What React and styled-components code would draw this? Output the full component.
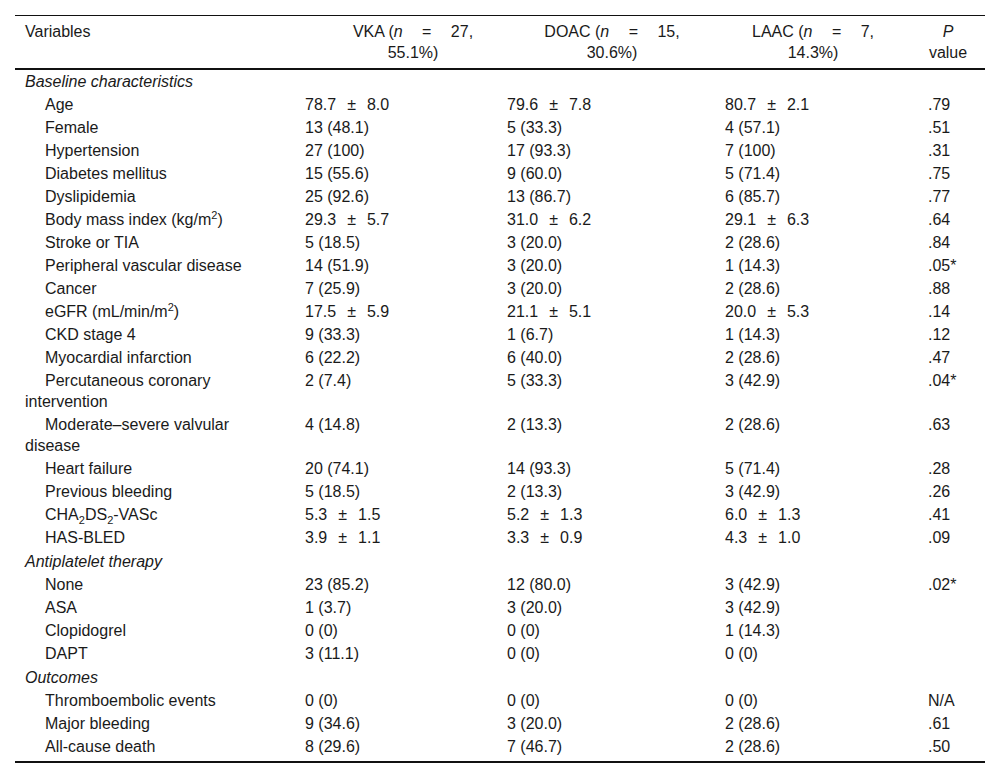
import React from 'react';
import styled, { createGlobalStyle } from 'styled-components';

const GlobalStyle = createGlobalStyle`
  body {
    margin: 0;
    background: #fff;
  }
`;

const Page = styled.div`
  padding: 15px;
  font-family: 'Liberation Sans', Arial, sans-serif;
  font-size: 16px;
  color: #1a1a1a;
`;

const Table = styled.table`
  width: 970px;
  border-collapse: separate;
  border-spacing: 0;
  table-layout: fixed;
  border-top: 1px solid #111;
  border-bottom: 2px solid #111;
`;

const HeadCell = styled.th`
  font-weight: normal;
  line-height: 21px;
  vertical-align: top;
  text-align: ${(p) => (p.$left ? 'left' : 'center')};
  padding: 5px 10px 5px ${(p) => p.$pl || 10}px;
  border-bottom: 2px solid #111;
  white-space: nowrap;
`;

const Eq = styled.span`
  padding: 0 19.4px;
`;

const Row = styled.tr`
  &:last-child td {
    padding-bottom: 4px;
  }
`;

const Cell = styled.td`
  line-height: 21px;
  vertical-align: top;
  padding: 1px 10px;
`;

const LabelCell = styled(Cell)`
  padding-right: 30px;
  padding-top: ${(p) => (p.$extra ? '2px' : '1px')};
  text-indent: ${(p) => (p.$indent ? '20px' : '0')};
  font-style: ${(p) => (p.$section ? 'italic' : 'normal')};
`;

const Pm = styled.span`
  padding: 0 11px;
`;

const Sup = styled.sup`
  font-size: 11px;
  line-height: 0;
  vertical-align: 6px;
`;

const Sub = styled.sub`
  font-size: 11px;
  line-height: 0;
  vertical-align: -4px;
`;

const pm = (a, b) => (
  <>
    {a}
    <Pm>±</Pm>
    {b}
  </>
);

const rows = [
  { section: 'Baseline characteristics' },
  ['Age', pm('78.7', '8.0'), pm('79.6', '7.8'), pm('80.7', '2.1'), '.79'],
  ['Female', '13 (48.1)', '5 (33.3)', '4 (57.1)', '.51'],
  ['Hypertension', '27 (100)', '17 (93.3)', '7 (100)', '.31'],
  ['Diabetes mellitus', '15 (55.6)', '9 (60.0)', '5 (71.4)', '.75'],
  ['Dyslipidemia', '25 (92.6)', '13 (86.7)', '6 (85.7)', '.77'],
  [<>Body mass index (kg/m<Sup>2</Sup>)</>, pm('29.3', '5.7'), pm('31.0', '6.2'), pm('29.1', '6.3'), '.64'],
  ['Stroke or TIA', '5 (18.5)', '3 (20.0)', '2 (28.6)', '.84'],
  ['Peripheral vascular disease', '14 (51.9)', '3 (20.0)', '1 (14.3)', '.05*'],
  ['Cancer', '7 (25.9)', '3 (20.0)', '2 (28.6)', '.88'],
  [<>eGFR (mL/min/m<Sup>2</Sup>)</>, pm('17.5', '5.9'), pm('21.1', '5.1'), pm('20.0', '5.3'), '.14'],
  ['CKD stage 4', '9 (33.3)', '1 (6.7)', '1 (14.3)', '.12'],
  ['Myocardial infarction', '6 (22.2)', '6 (40.0)', '2 (28.6)', '.47'],
  ['Percutaneous coronary intervention', '2 (7.4)', '5 (33.3)', '3 (42.9)', '.04*'],
  ['Moderate–severe valvular disease', '4 (14.8)', '2 (13.3)', '2 (28.6)', '.63'],
  ['Heart failure', '20 (74.1)', '14 (93.3)', '5 (71.4)', '.28'],
  ['Previous bleeding', '5 (18.5)', '2 (13.3)', '3 (42.9)', '.26'],
  [<>CHA<Sub>2</Sub>DS<Sub>2</Sub>-VASc</>, pm('5.3', '1.5'), pm('5.2', '1.3'), pm('6.0', '1.3'), '.41'],
  ['HAS-BLED', pm('3.9', '1.1'), pm('3.3', '0.9'), pm('4.3', '1.0'), '.09'],
  { section: 'Antiplatelet therapy' },
  ['None', '23 (85.2)', '12 (80.0)', '3 (42.9)', '.02*'],
  ['ASA', '1 (3.7)', '3 (20.0)', '3 (42.9)', ''],
  ['Clopidogrel', '0 (0)', '0 (0)', '1 (14.3)', ''],
  ['DAPT', '3 (11.1)', '0 (0)', '0 (0)', ''],
  { section: 'Outcomes' },
  ['Thromboembolic events', '0 (0)', '0 (0)', '0 (0)', 'N/A'],
  ['Major bleeding', '9 (34.6)', '3 (20.0)', '2 (28.6)', '.61'],
  ['All-cause death', '8 (29.6)', '7 (46.7)', '2 (28.6)', '.50'],
];

const groups = [
  { name: 'VKA', n: '27', pct: '55.1%', pl: 44 },
  { name: 'DOAC', n: '15', pct: '30.6%', pl: 22 },
  { name: 'LAAC', n: '7', pct: '14.3%', pl: 3 },
];

export default function App() {
  return (
    <Page>
      <GlobalStyle />
      <Table>
        <colgroup>
          <col style={{ width: 280 }} />
          <col style={{ width: 202 }} />
          <col style={{ width: 218 }} />
          <col style={{ width: 203 }} />
          <col style={{ width: 67 }} />
        </colgroup>
        <thead>
          <tr>
            <HeadCell $left>Variables</HeadCell>
            {groups.map((g) => (
              <HeadCell key={g.name} $pl={g.pl}>
                {g.name} (<i>n</i>
                <Eq>=</Eq>
                {g.n},
                <br />
                {g.pct})
              </HeadCell>
            ))}
            <HeadCell $pl={3}>
              <i>P</i>
              <br />
              value
            </HeadCell>
          </tr>
        </thead>
        <tbody>
          {rows.map((r, i) =>
            r.section ? (
              <Row key={i}>
                <LabelCell $section $extra={i > 0} colSpan={5}>
                  {r.section}
                </LabelCell>
              </Row>
            ) : (
              <Row key={i}>
                <LabelCell $indent>{r[0]}</LabelCell>
                <Cell>{r[1]}</Cell>
                <Cell>{r[2]}</Cell>
                <Cell>{r[3]}</Cell>
                <Cell>{r[4]}</Cell>
              </Row>
            )
          )}
        </tbody>
      </Table>
    </Page>
  );
}
